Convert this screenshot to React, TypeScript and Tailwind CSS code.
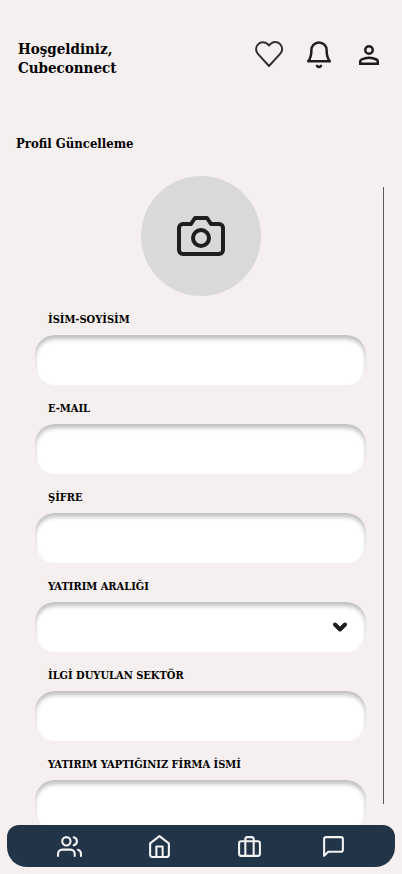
import type { ReactNode } from "react";

const fieldShape =
  "block h-[50px] w-full appearance-none rounded-[20px] bg-white px-4 text-sm outline-none shadow-[inset_0_4px_4px_rgba(0,0,0,0.25)]";

function Field({ id, label, children }: { id: string; label: string; children: ReactNode }) {
  return (
    <div className="flex flex-col gap-[5px]">
      <label htmlFor={id} className="ml-[13px] text-[11px] leading-5 font-bold whitespace-nowrap">
        {label}
      </label>
      {children}
    </div>
  );
}

function TextField({ id, label, type = "text" }: { id: string; label: string; type?: string }) {
  return (
    <Field id={id} label={label}>
      <input id={id} type={type} className={fieldShape} />
    </Field>
  );
}

function NavButton({ label, children }: { label: string; children: ReactNode }) {
  return (
    <button type="button" aria-label={label} className="flex size-7 items-center justify-center">
      <svg
        viewBox="0 0 24 24"
        className="size-[25px] fill-none stroke-[#f3f3f3] stroke-2"
        strokeLinecap="round"
        strokeLinejoin="round"
      >
        {children}
      </svg>
    </button>
  );
}

export default function App() {
  return (
    <div className="flex h-dvh flex-col overflow-hidden bg-[#f5efef] font-['DejaVu_Serif_Condensed','DejaVu_Serif',serif] text-black">
      <header className="flex items-start justify-between px-[18px] pt-10">
        <p className="text-[15px] leading-[19px] font-bold">
          Hoşgeldiniz,
          <br />
          Cubeconnect
        </p>
        <div className="flex items-center gap-5">
          <button type="button" aria-label="Favoriler" className="flex size-[30px] items-center justify-center">
            <svg viewBox="0 0 30 30" className="size-[30px] fill-none stroke-[#303030] stroke-2" strokeLinejoin="round">
              <path d="M26.1 4.1a6.9 6.9 0 0 0-9.7 0L15 5.4l-1.4-1.3A6.9 6.9 0 0 0 3.9 13.9L15 26l11.1-12.1a6.9 6.9 0 0 0 0-9.8Z" />
            </svg>
          </button>
          <button type="button" aria-label="Bildirimler" className="flex size-[30px] items-center justify-center">
            <svg
              viewBox="0 0 30 30"
              className="size-[30px] fill-none stroke-[#1e1e1e] stroke-[2.5]"
              strokeLinecap="round"
              strokeLinejoin="round"
            >
              <path d="M4.2 21.3c2.6-3.2 3.2-5.8 3.2-11.3a7.6 7.6 0 0 1 15.2 0c0 5.500.6 8.100 3.200 11.300Z" />
              <path d="M13 25.900q2 2.200 4 0" />
            </svg>
          </button>
          <button type="button" aria-label="Profil" className="flex size-[30px] items-center justify-center">
            <svg viewBox="0 0 24 24" className="size-[30px] fill-none stroke-[#1d1b20] stroke-2">
              <circle cx="12" cy="8" r="3" />
              <path d="M5 19v-1.800c0-.7.4-1.300 1-1.600 4-1.900 8-1.900 12 0 .6.3 1 .9 1 1.600V19Z" />
            </svg>
          </button>
        </div>
      </header>

      <h1 className="mt-14 ml-4 text-[13px] leading-5 font-bold">Profil Güncelleme</h1>

      <div className="mt-[22px] flex min-h-0 flex-1">
        <form className="min-w-0 flex-1 overflow-y-auto pr-[17px] pl-[35px] [scrollbar-width:none]">
          <button
            type="button"
            aria-label="Fotoğraf ekle"
            className="mx-auto flex size-[120px] items-center justify-center rounded-full bg-[#d9d9d9]"
          >
            <svg
              viewBox="0 0 52 44"
              className="h-[44px] w-[52px] fill-none stroke-[#1e1e1e] stroke-4"
              strokeLinecap="round"
              strokeLinejoin="round"
            >
              <path d="M48 36a4 4 0 0 1-4 4H8a4 4 0 0 1-4-4V14a4 4 0 0 1 4-4h8l4-6h12l4 6h8a4 4 0 0 1 4 4Z" />
              <circle cx="26" cy="24" r="8" />
            </svg>
          </button>
          <div className="mt-3.5 flex flex-col gap-3.5 pb-12">
            <TextField id="name" label="İSİM-SOYİSİM" />
            <TextField id="email" label="E-MAIL" type="email" />
            <TextField id="password" label="ŞİFRE" type="password" />
            <Field id="range" label="YATIRIM ARALIĞI">
              <div className="relative">
                <select id="range" className={fieldShape} />
                <svg
                  viewBox="0 0 16 12"
                  className="pointer-events-none absolute top-[19px] right-[18px] h-3 w-4 fill-none stroke-[#1e1e1e] stroke-4"
                  strokeLinecap="round"
                  strokeLinejoin="round"
                >
                  <path d="m3 3.500 5 5 5-5" />
                </svg>
              </div>
            </Field>
            <TextField id="sector" label="İLGİ DUYULAN SEKTÖR" />
            <TextField id="company" label="YATIRIM YAPTIĞINIZ FİRMA İSMİ" />
          </div>
        </form>
        <div className="mt-[11px] mr-[18px] mb-[70px] w-px bg-[#5c5959]" />
      </div>

      <nav className="fixed inset-x-[7px] bottom-[7px] flex h-[42px] items-center justify-between rounded-t-[12px] rounded-b-[20px] bg-[#223448] px-12">
        <div className="flex gap-[62px]">
          <NavButton label="Topluluk">
            <path d="M17 21v-2a4 4 0 0 0-4-4H5a4 4 0 0 0-4 4v2M23 21v-2a4 4 0 0 0-3-3.900M16 3.100a4 4 0 0 1 0 7.800" />
            <circle cx="9" cy="7" r="4" />
          </NavButton>
          <NavButton label="Ana sayfa">
            <path d="m3 9 9-7 9 7v11a2 2 0 0 1-2 2H5a2 2 0 0 1-2-2ZM9 22V12h6v10" />
          </NavButton>
          <NavButton label="Portföy">
            <rect x="2" y="7" width="20" height="14" rx="2" />
            <path d="M16 21V5a2 2 0 0 0-2-2h-4a2 2 0 0 0-2 2v16" />
          </NavButton>
        </div>
        <NavButton label="Mesajlar">
          <path d="M21 15a2 2 0 0 1-2 2H7l-4 4V5a2 2 0 0 1 2-2h14a2 2 0 0 1 2 2Z" />
        </NavButton>
      </nav>
    </div>
  );
}
